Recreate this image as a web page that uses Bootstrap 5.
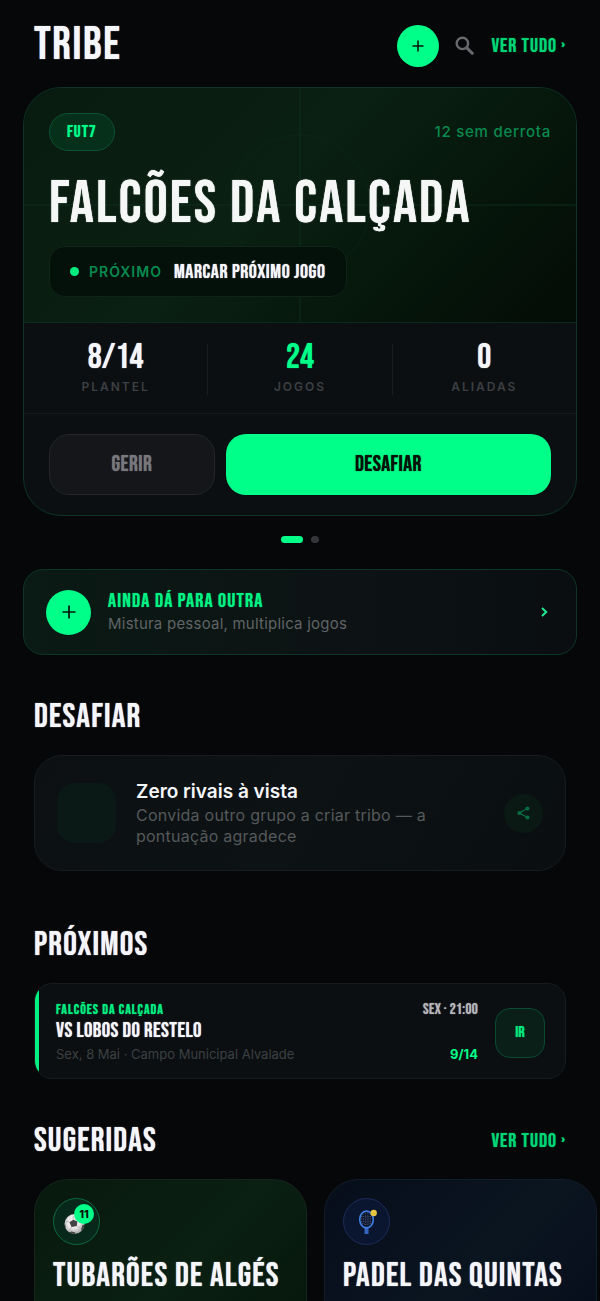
<!DOCTYPE html>
<html lang="pt">
<head>
<meta charset="utf-8">
<meta name="viewport" content="width=device-width, initial-scale=1">
<title>Tribe</title>
<link href="https://cdn.jsdelivr.net/npm/bootstrap@5.3.0/dist/css/bootstrap.min.css" rel="stylesheet">
<style>
:root { --neon: #00ff88; --panel: #0b0f12; --side: 34px; }
body { background: #060709; color: #f5f6fa; font-family: Inter, "Liberation Sans", sans-serif; }
.app { scrollbar-width: none; }
.app::-webkit-scrollbar, .rail::-webkit-scrollbar { display: none; }
.display-face { font-family: "Bebas Neue", "Roboto Condensed", sans-serif; font-weight: 400; line-height: 1; margin: 0; letter-spacing: .035em; text-shadow: 0 0 1px currentColor; }
.neon { color: var(--neon); }
.topbar { padding: 23px var(--side) 18px; }
.brand { font-size: 46px; }
.see-all { font-size: 20px; color: #00d574; letter-spacing: 1px; }
.round-add { background: var(--neon); color: #04120a; border: 0; padding: 0; flex: none; }
.round-add.size-a { width: 42px; height: 42px; }
.round-add.size-b { width: 45px; height: 45px; }
.bare { background: none; border: 0; padding: 0; line-height: 0; }
.wide { margin-left: 23px; margin-right: 23px; }
.inset { margin-left: var(--side); margin-right: var(--side); }

.tribe-card { background: #0b0f12; border: 1px solid #0c3527; border-radius: 38px; overflow: hidden; }
.hero { padding: 25px; background: linear-gradient(135deg, #091b10 0%, #0a2012 45%, #05140a 78%, #040c06 100%); border-bottom: 1px solid #0c2a1c; }
.pitch { inset: 0; width: 100%; height: 100%; }
.chip { height: 38px; padding: 0 17px; border: 1px solid #0d5233; border-radius: 19px; background: #07301b; color: var(--neon); font-size: 17px; letter-spacing: 1px; }
.streak { color: #078a4f; font-size: 15px; line-height: 26px; font-weight: 500; letter-spacing: .05em; }
.team { font-size: 60px; margin-top: 23px; color: #f4f7f6; }
.next-box { height: 51px; margin-top: 12px; padding: 0 20px; border: 1px solid #10241a; border-radius: 16px; background: #04100a; }
.next-box .pulse { width: 9px; height: 9px; background: #00ec7e; }
.next-box .tag { font-size: 14px; font-weight: 600; letter-spacing: 1px; color: #078a4f; margin: 0 12px 0 10px; }
.next-box .what { font-size: 20px; letter-spacing: .03em; }
.stats { padding: 21px 0 18px; border-bottom: 1px solid #14191b; }
.stats > div + div { border-left: 1px solid #181c1f; }
.stats .num { font-size: 35px; line-height: 28px; letter-spacing: 0; }
.stats .cap { font-size: 12px; line-height: 16px; margin-top: 7px; font-weight: 600; letter-spacing: 2px; color: #3c3f43; }
.actions { padding: 20px 25px; gap: 11px; }
.act { height: 61px; border-radius: 20px; font-size: 22px; padding: 0; letter-spacing: .02em; }
.act-quiet { flex: 0 0 33%; background: #15161a; border: 1px solid #25262a; color: #77787b; }
.act-main { background: var(--neon); border: 0; color: #04120a; }
.dots { margin-top: 20px; gap: 8px; }
.dots span { width: 8px; height: 7px; border-radius: 4px; background: #343538; }
.dots .on { width: 22px; background: var(--neon); }

.again { margin-top: 26px; padding: 19px 28px 19px 22px; gap: 17px; border: 1px solid #0c3527; border-radius: 20px; background: linear-gradient(90deg, #0a1a14, #0d1214 60%, #0a0e10); color: inherit; }
.again .ttl { font-size: 20px; line-height: 24px; letter-spacing: .06em; color: #00f282; }
.sub { font-size: 16px; line-height: 21px; color: #55595b; letter-spacing: .015em; }
.again .sub { font-size: 15px; line-height: 22px; color: #606466; }

.section-title { font-size: 34px; }
.head-a { margin-top: 45px; margin-bottom: 21px; }
.head-b { margin-top: 57px; margin-bottom: 21px; }
.rival { padding: 23px 22px; gap: 20px; border: 1px solid #171b1d; border-radius: 28px; background: linear-gradient(120deg, #0c1013, #0d1214 50%, #0a0e10); }
.rival .tile { width: 59px; height: 60px; border-radius: 18px; background: #0a1915; }
.rival .ttl { font-size: 19px; line-height: 26px; font-weight: 600; }
.share { width: 39px; height: 39px; background: #0a1914; color: #086b42; }
.game { padding: 18px 20px 15px 21px; border: 1px solid #171b1d; border-radius: 18px; background: var(--panel); overflow: hidden; }
.game::before { content: ""; position: absolute; inset: 0 auto 0 0; width: 4px; background: #00f081; }
.game .org { font-size: 14px; line-height: 16px; letter-spacing: 1px; color: #00ee80; }
.game .vs { font-size: 21px; line-height: 24px; margin-top: 1px; letter-spacing: .02em; }
.game .where { font-size: 13px; line-height: 18px; margin-top: 2px; color: #3c4042; }
.game .time { font-size: 15px; line-height: 16px; letter-spacing: .02em; color: #b4b6b9; }
.game .count { font-size: 13px; line-height: 18px; font-weight: 700; }
.go { width: 50px; height: 50px; margin-left: 17px; padding: 0; border: 1px solid #0a4a31; border-radius: 15px; background: #0a1f18; color: #00e87c; font-size: 16px; letter-spacing: 0; }

.rail { gap: 17px; padding: 0 var(--side); overflow-x: auto; scrollbar-width: none; }
.suggest { flex: 0 0 273px; min-height: 260px; padding: 18px; border: 1px solid #14251c; border-radius: 34px; background: linear-gradient(135deg, #08190d, #0a2012 45%, #040f07); }
.suggest.blue { border-color: #131c28; background: linear-gradient(135deg, #070d1b, #0a1520 45%, #050817); }
.suggest .disc { width: 47px; height: 47px; border: 1px solid #0c6a40; background: #07281a; }
.suggest.blue .disc { border-color: #1d2c58; background: #0a1530; }
.suggest .ttl { font-size: 34px; margin-top: 14px; white-space: nowrap; }
.tally { top: 5px; right: 5px; width: 20px; height: 20px; background: var(--neon); color: #04120a; font-size: 11px; font-weight: 800; line-height: 20px; }
</style>
</head>
<body>
<div class="app vh-100 overflow-auto">
  <header class="topbar d-flex align-items-center">
    <h1 class="display-face brand me-auto">TRIBE</h1>
    <button type="button" class="round-add size-a rounded-circle d-flex align-items-center justify-content-center" aria-label="Criar tribo">
      <svg width="12" height="12" viewBox="0 0 12 12" stroke="currentColor" stroke-width="1.5"><path d="M6 .5v11M.5 6h11"/></svg>
    </button>
    <button type="button" class="bare ms-3 me-3" aria-label="Procurar">
      <svg width="20" height="20" viewBox="0 0 20 20" fill="none" stroke="#68696c"><circle cx="7.4" cy="7.4" r="5.7" stroke-width="2.4"/><path d="M11.6 11.6l6.6 6.6" stroke-width="3"/></svg>
    </button>
    <a href="#" class="display-face see-all text-decoration-none">VER TUDO ›</a>
  </header>

  <main>
    <section class="tribe-card wide">
      <div class="hero position-relative">
        <svg class="pitch position-absolute" aria-hidden="true" fill="none" stroke="#0c2c1c"><line x1="50%" y1="0" x2="50%" y2="100%"/><line x1="0" y1="50%" x2="100%" y2="50%"/><circle cx="50%" cy="50%" r="70" stroke-opacity=".6"/></svg>
        <div class="position-relative">
          <div class="d-flex justify-content-between align-items-center">
            <span class="display-face chip d-flex align-items-center">FUT7</span>
            <span class="streak">12 sem derrota</span>
          </div>
          <h2 class="display-face team">FALCÕES DA CALÇADA</h2>
          <div class="next-box d-inline-flex align-items-center">
            <span class="pulse rounded-circle"></span><span class="tag">PRÓXIMO</span><span class="display-face what">MARCAR PRÓXIMO JOGO</span>
          </div>
        </div>
      </div>
      <div class="stats row g-0 text-center">
        <div class="col"><div class="display-face num">8/14</div><div class="cap">PLANTEL</div></div>
        <div class="col"><div class="display-face num neon">24</div><div class="cap">JOGOS</div></div>
        <div class="col"><div class="display-face num">0</div><div class="cap">ALIADAS</div></div>
      </div>
      <div class="actions d-flex">
        <button type="button" class="display-face act act-quiet">GERIR</button>
        <button type="button" class="display-face act act-main flex-fill">DESAFIAR</button>
      </div>
    </section>
    <div class="dots d-flex justify-content-center"><span class="on"></span><span></span></div>

    <a href="#" class="again wide d-flex align-items-center text-decoration-none">
      <span class="round-add size-b rounded-circle d-flex align-items-center justify-content-center">
        <svg width="14" height="14" viewBox="0 0 14 14" stroke="currentColor" stroke-width="1.7"><path d="M7 .5v13M.5 7h13"/></svg>
      </span>
      <span class="flex-fill">
        <span class="display-face ttl d-block">AINDA DÁ PARA OUTRA</span>
        <span class="sub d-block">Mistura pessoal, multiplica jogos</span>
      </span>
      <svg width="7" height="10" viewBox="0 0 7 10" fill="none" stroke="#20e890" stroke-width="2"><path d="M1 1l4.2 4L1 9"/></svg>
    </a>

    <h2 class="display-face section-title inset head-a">DESAFIAR</h2>
    <section class="rival inset d-flex align-items-center">
      <span class="tile flex-shrink-0"></span>
      <div class="flex-fill">
        <div class="ttl">Zero rivais à vista</div>
        <div class="sub">Convida outro grupo a criar tribo — a pontuação agradece</div>
      </div>
      <button type="button" class="bare share rounded-circle flex-shrink-0 d-flex align-items-center justify-content-center" aria-label="Partilhar">
        <svg width="13" height="14" viewBox="0 0 13 14" fill="currentColor"><circle cx="2.4" cy="7" r="2.1"/><circle cx="10.4" cy="2.5" r="2.1"/><circle cx="10.4" cy="11.5" r="2.1"/><path d="M10.4 2.5L2.4 7l8 4.5" fill="none" stroke="currentColor" stroke-width="1.4"/></svg>
      </button>
    </section>

    <h2 class="display-face section-title inset head-b">PRÓXIMOS</h2>
    <section class="game inset position-relative d-flex align-items-center">
      <div class="flex-fill">
        <div class="display-face org">FALCÕES DA CALÇADA</div>
        <div class="display-face vs">VS LOBOS DO RESTELO</div>
        <div class="where">Sex, 8 Mai · Campo Municipal Alvalade</div>
      </div>
      <div class="align-self-stretch d-flex flex-column justify-content-between align-items-end">
        <div class="display-face time">SEX · 21:00</div>
        <div class="count neon">9/14</div>
      </div>
      <button type="button" class="display-face go">IR</button>
    </section>

    <div class="head-a inset d-flex justify-content-between align-items-center">
      <h2 class="display-face section-title">SUGERIDAS</h2>
      <a href="#" class="display-face see-all text-decoration-none">VER TUDO ›</a>
    </div>
    <div class="rail d-flex">
      <article class="suggest">
        <div class="disc position-relative rounded-circle d-flex align-items-center justify-content-center">
          <svg width="22" height="22" viewBox="0 0 22 22" overflow="visible" aria-hidden="true">
            <defs>
              <clipPath id="ballClip"><circle cx="8.5" cy="13" r="10"/></clipPath>
              <radialGradient id="ballShade" cx=".45" cy=".4" r=".6"><stop offset=".5" stop-color="#ebe9ea"/><stop offset="1" stop-color="#aaa8a9"/></radialGradient>
            </defs>
            <circle cx="8.5" cy="13" r="10" fill="url(#ballShade)"/>
            <g clip-path="url(#ballClip)" fill="#444244">
              <path d="M3.4 11.2l3.9-2.5 4 1.8-.5 4.4-5.2 1.2z"/>
              <path d="M-3 12l2.4 1.6.4 3.6-2 1zM1.5 22l4-1.4 4 .8-1 3H2zM15 18.5l1.5-4.4 3-.6v5l-3 3z"/>
              <path d="M3.4 11.2L0 10M-.6 13.6l2-4M5.6 16.1l-2 3.5M10.8 14.9l4.4 2.8M7.3 8.7V5M11.3 10.5l4.4-2" fill="none" stroke="#b9b6b8" stroke-width=".8"/>
            </g>
          </svg>
          <span class="tally position-absolute rounded-circle text-center">11</span>
        </div>
        <h3 class="display-face ttl">TUBARÕES DE ALGÉS</h3>
      </article>
      <article class="suggest blue">
        <div class="disc rounded-circle d-flex align-items-center justify-content-center">
          <svg width="20" height="26" viewBox="0 0 20 26" aria-hidden="true">
            <path d="M9.5 17v8" stroke="#3463bd" stroke-width="4"/>
            <ellipse cx="9.5" cy="10.5" rx="6.8" ry="8.4" fill="#0b1428" stroke="#407fe4" stroke-width="1.6"/>
            <path d="M6 5v11M8.4 4v13.5M10.8 4v13.5M13.2 5v11M4 7.5h11M4 10h11.5M4 12.5h11M5 15h9" stroke="#506080" stroke-width=".8" stroke-dasharray="1 1.2"/>
            <circle cx="16.7" cy="4" r="3.2" fill="#e8c541"/>
          </svg>
        </div>
        <h3 class="display-face ttl">PADEL DAS QUINTAS</h3>
      </article>
    </div>
  </main>
</div>
<script src="https://cdn.jsdelivr.net/npm/bootstrap@5.3.0/dist/js/bootstrap.bundle.min.js"></script>
</body>
</html>
